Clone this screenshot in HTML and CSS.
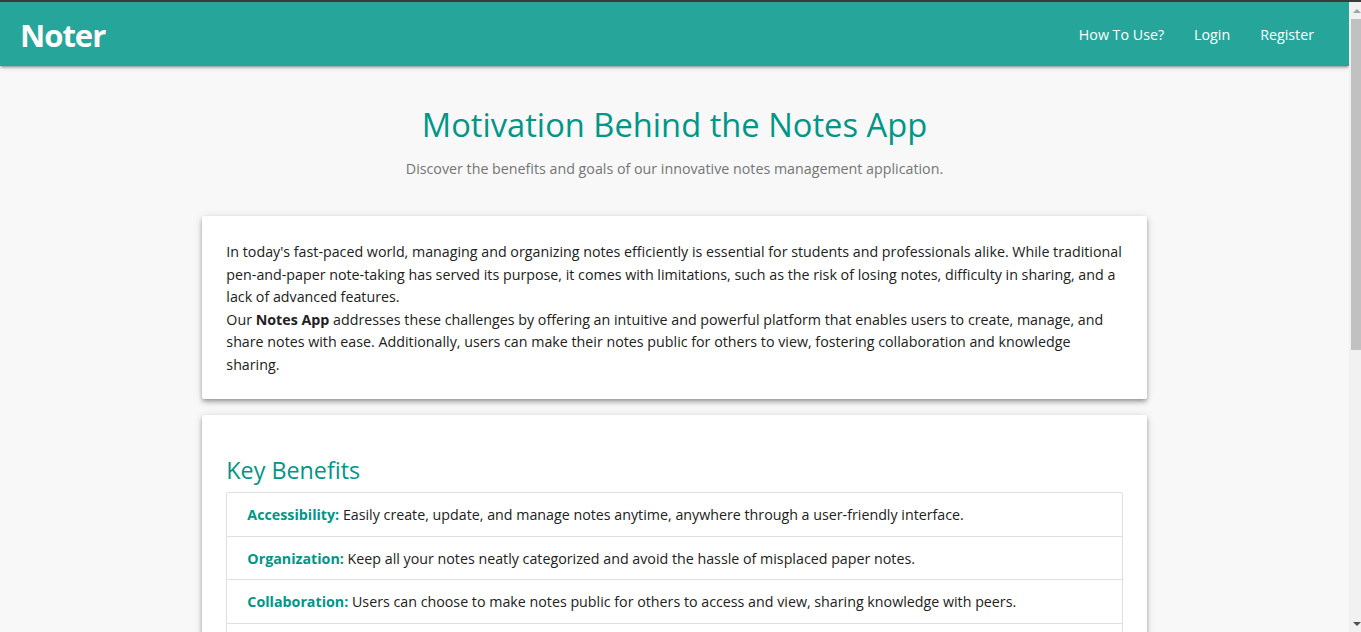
FILE: index.html
```html
<!DOCTYPE html>
<html lang="en">
<head>
<meta charset="utf-8">
<title>Noter - Motivation</title>
<link rel="stylesheet" href="styles.css">
</head>
<body>
<div class="frame">
  <div class="topline"></div>
  <div class="viewport">
    <div class="page">
      <nav class="navbar">
        <a class="brand" href="#">Noter</a>
        <ul class="nav-links">
          <li><a href="#">How To Use?</a></li>
          <li><a href="#">Login</a></li>
          <li><a href="#">Register</a></li>
        </ul>
      </nav>
      <main class="container">
        <header class="intro">
          <h1 class="title">Motivation Behind the Notes App</h1>
          <p class="subtitle">Discover the benefits and goals of our innovative notes management application.</p>
        </header>
        <section class="card">
          <div class="card-content text-content">
            <p>In today's fast-paced world, managing and organizing notes efficiently is essential for students and professionals alike. While traditional pen-and-paper note-taking has served its purpose, it comes with limitations, such as the risk of losing notes, difficulty in sharing, and a lack of advanced features.<br>Our <strong>Notes App</strong> addresses these challenges by offering an intuitive and powerful platform that enables users to create, manage, and share notes with ease. Additionally, users can make their notes public for others to view, fostering collaboration and knowledge sharing.</p>
          </div>
        </section>
        <section class="card">
          <div class="card-content">
            <h2 class="section-title">Key Benefits</h2>
            <ul class="collection">
              <li class="collection-item"><strong class="label">Accessibility:</strong> Easily create, update, and manage notes anytime, anywhere through a user-friendly interface.</li>
              <li class="collection-item"><strong class="label">Organization:</strong> Keep all your notes neatly categorized and avoid the hassle of misplaced paper notes.</li>
              <li class="collection-item"><strong class="label">Collaboration:</strong> Users can choose to make notes public for others to access and view, sharing knowledge with peers.</li>
              <li class="collection-item"><strong class="label">Security:</strong> Your private notes stay protected and are visible only to you.</li>
              <li class="collection-item"><strong class="label">Eco-Friendly:</strong> Reduce paper usage and contribute to a greener planet.</li>
            </ul>
          </div>
        </section>
      </main>
    </div>
    <div class="scrollbar" aria-hidden="true">
      <div class="sb-button"><span class="sb-arrow-up"></span></div>
      <div class="sb-track">
        <div class="sb-thumb"></div>
      </div>
      <div class="sb-button sb-button-bottom"><span class="sb-arrow-down"></span></div>
    </div>
  </div>
</div>
</body>
</html>
```
FILE: styles.css
```css
* { box-sizing: border-box; }

html, body {
  margin: 0;
  height: 100%;
  overflow: hidden;
}

body {
  font-family: "Open Sans", "Liberation Sans", sans-serif;
  font-size: 14.25px;
  line-height: 22.5px;
  color: #212121;
  background: #f8f8f8;
}

.frame {
  display: flex;
  flex-direction: column;
  height: 100vh;
}

.topline {
  height: 2px;
  flex: none;
  background: #3a3a3a;
}

.viewport {
  flex: 1;
  min-height: 0;
  display: flex;
}

.page {
  flex: 1;
  min-width: 0;
  overflow: hidden;
  background: #f8f8f8;
}

/* Navbar */
.navbar {
  height: 64px;
  padding: 0 20px;
  display: flex;
  align-items: center;
  justify-content: space-between;
  background: #26a69a;
  box-shadow: 0 2px 2px 0 rgba(0,0,0,.14), 0 3px 1px -2px rgba(0,0,0,.12), 0 1px 5px 0 rgba(0,0,0,.2);
  position: relative;
  z-index: 2;
}

.brand {
  color: #fff;
  text-decoration: none;
  font-weight: 700;
  font-size: 31px;
  letter-spacing: -1px;
  line-height: 64px;
  padding-top: 1px;
}

.nav-links {
  display: flex;
  list-style: none;
  margin: 0;
  padding: 0;
}

.nav-links a {
  display: block;
  padding: 1px 15px 0;
  line-height: 64px;
  color: #fff;
  text-decoration: none;
  font-size: 14.25px;
}

/* Content */
.container {
  width: 70%;
  margin: 0 auto;
  padding-bottom: 40px;
}

.intro {
  text-align: center;
  padding-top: 41px;
  padding-bottom: 35.5px;
}

.title {
  margin: 0 0 15px;
  font-size: 32.7px;
  line-height: 36px;
  font-weight: 400;
  color: #009688;
}

.subtitle {
  margin: 0;
  color: #757575;
}

.card {
  background: #fff;
  border-radius: 2px;
  margin-bottom: 15.5px;
  box-shadow: 0 4px 5px 0 rgba(0,0,0,.14), 0 1px 10px 0 rgba(0,0,0,.12), 0 2px 4px -1px rgba(0,0,0,.3);
}

.card-content {
  padding: 24px;
}

.text-content {
  padding: 25px 24px 23px;
}

.card-content p {
  margin: 0;
}

.card-content strong {
  font-weight: 700;
}

.section-title {
  margin: 19px 0 9px;
  font-size: 23.3px;
  line-height: 25.6px;
  font-weight: 400;
  color: #009688;
}

.collection {
  list-style: none;
  margin: 0;
  padding: 0;
  border: 1px solid #e0e0e0;
  border-radius: 2px;
}

.collection-item {
  padding: 11px 20px 9px;
  line-height: 22.5px;
  border-bottom: 1px solid #e0e0e0;
}

.collection-item:last-child {
  border-bottom: none;
}

.label {
  color: #009688;
}

/* Scrollbar imitation */
.scrollbar {
  width: 12px;
  flex: none;
  display: flex;
  flex-direction: column;
  background: #f1f1f1;
  overflow: hidden;
}

.sb-button {
  height: 17px;
  flex: none;
  display: flex;
  align-items: center;
  padding-left: 4px;
}

.sb-arrow-up {
  width: 0;
  height: 0;
  border-left: 4px solid transparent;
  border-right: 4px solid transparent;
  border-bottom: 4px solid #a3a3a3;
}

.sb-arrow-down {
  width: 0;
  height: 0;
  border-left: 4px solid transparent;
  border-right: 4px solid transparent;
  border-top: 4px solid #505050;
}

.sb-track {
  flex: 1;
  padding-left: 2px;
}

.sb-thumb {
  height: 331px;
  background: #c1c1c1;
}
```
